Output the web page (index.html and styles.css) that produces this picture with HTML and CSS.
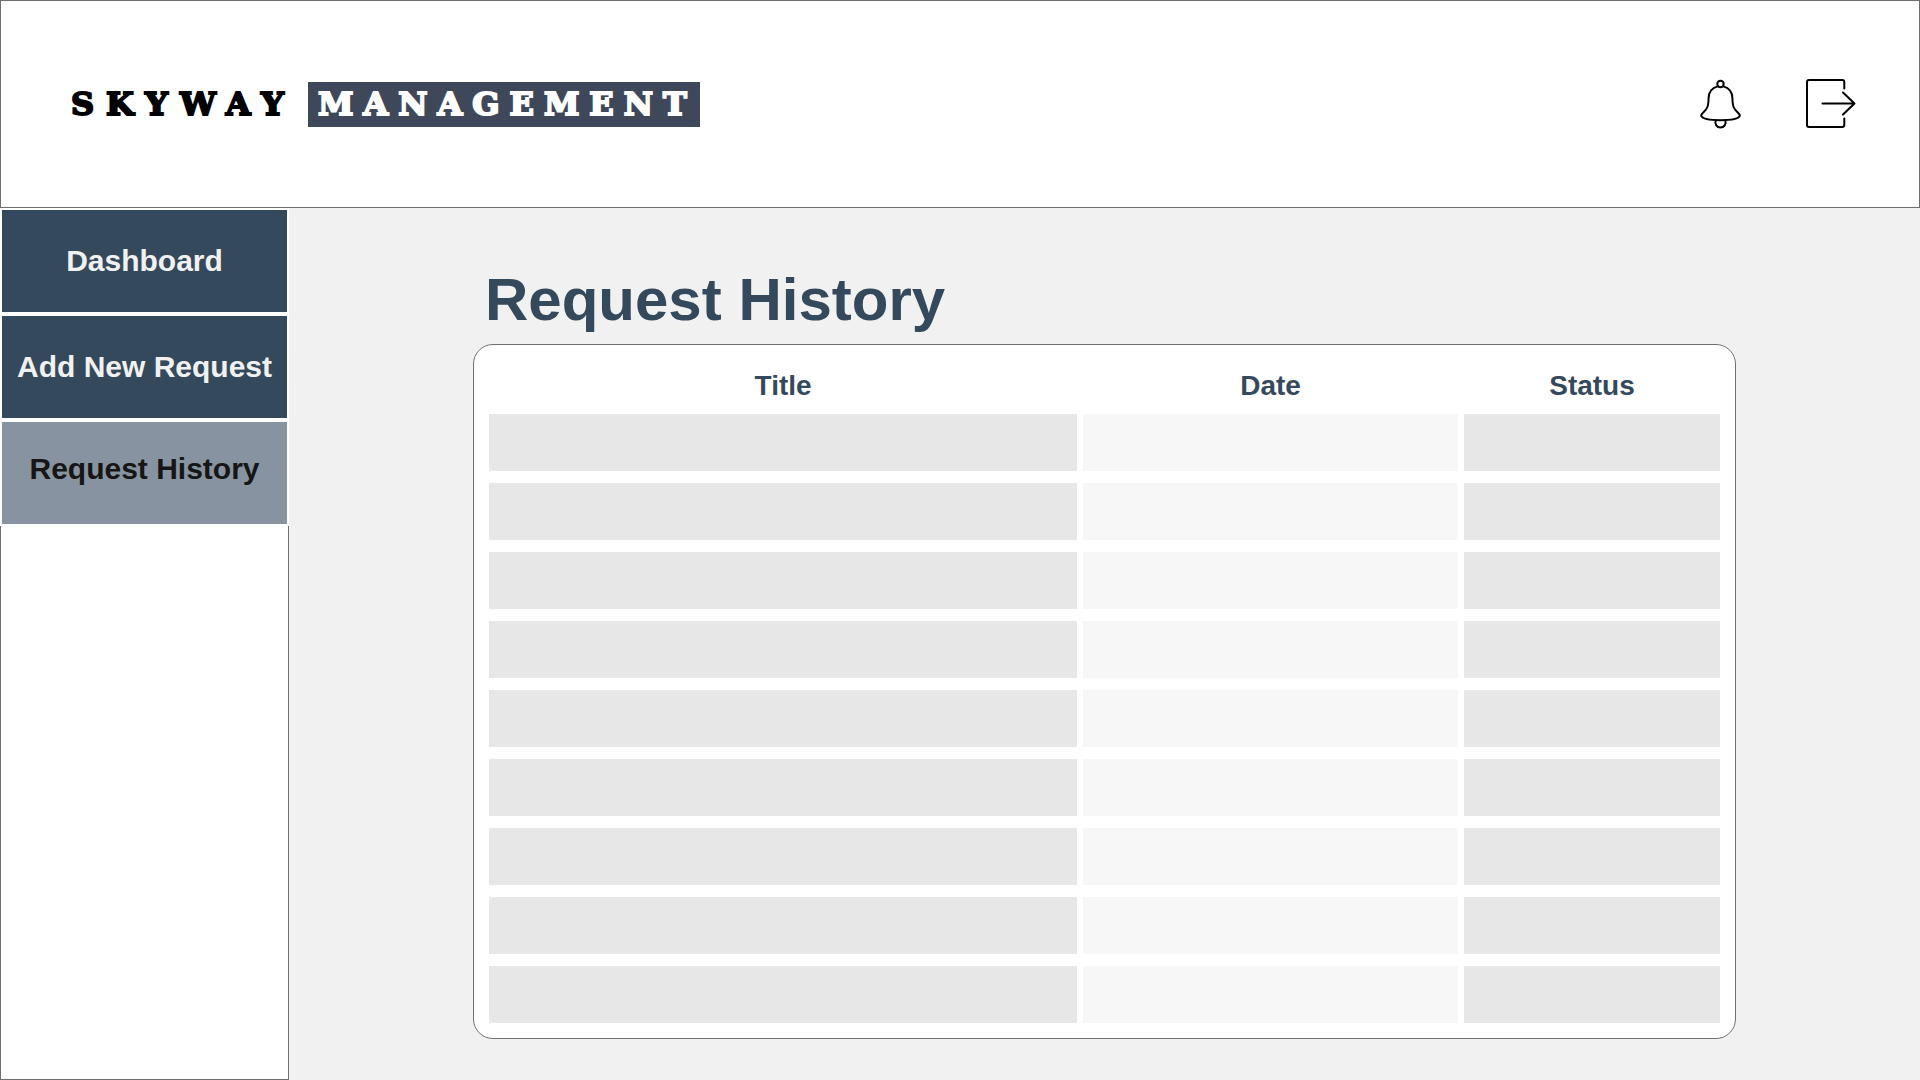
FILE: index.html
```html
<!DOCTYPE html>
<html lang="en">
<head>
  <meta charset="utf-8">
  <meta name="viewport" content="width=device-width, initial-scale=1">
  <title>Request History</title>
  <link rel="stylesheet" href="styles.css">
</head>
<body>
  <header class="topbar">
    <div class="logo"><span class="logo-name">SKYWAY</span><span class="logo-tag">MANAGEMENT</span></div>
    <div class="actions">
      <button class="icon-button" type="button" aria-label="Notifications">
        <svg width="42" height="50" viewBox="0 0 42 50">
          <circle cx="20.5" cy="5" r="3.2"/>
          <path d="M17.6 7.4C12 9 8.8 13 8.6 19C8.4 27 7.6 29.500 3.500 33.200C1.200 35.200.8 36 1.400 37.200C2.500 39.800 10 41.200 20.500 41.200S38.500 39.800 39.600 37.200C40.200 36 39.800 35.200 37.500 33.200C33.400 29.500 32.600 27 32.400 19C32.200 13 29 9 23.400 7.400"/>
          <path d="M15.700 41.500C14.500 45 16.800 48.600 20.500 48.600S26.500 45 25.300 41.500"/>
        </svg>
      </button>
      <button class="icon-button" type="button" aria-label="Log out">
        <svg width="50" height="50" viewBox="0 0 50 50">
          <path d="M38.300 9.500V3a2 2 0 0 0-2-2H3a2 2 0 0 0-2 2V46a2 2 0 0 0 2 2H36.300a2 2 0 0 0 2-2V39.500"/>
          <path d="M16.500 24.500H48.200M37 13.500L48.500 24.500L37 35.500"/>
        </svg>
      </button>
    </div>
  </header>
  <div class="layout">
    <aside class="sidebar">
      <nav class="menu">
        <a class="menu-item" href="#dashboard">Dashboard</a>
        <a class="menu-item" href="#new">Add New Request</a>
        <a class="menu-item menu-item-active" href="#history" aria-current="page">Request History</a>
      </nav>
      <div class="sidebar-rest"></div>
    </aside>
    <main class="content">
      <h1 class="heading">Request History</h1>
      <div class="card">
        <table class="history">
          <colgroup><col class="col-title"><col class="col-date"><col class="col-status"></colgroup>
          <thead>
            <tr><th scope="col">Title</th><th scope="col">Date</th><th scope="col">Status</th></tr>
          </thead>
          <tbody>
            <tr><td></td><td></td><td></td></tr>
            <tr><td></td><td></td><td></td></tr>
            <tr><td></td><td></td><td></td></tr>
            <tr><td></td><td></td><td></td></tr>
            <tr><td></td><td></td><td></td></tr>
            <tr><td></td><td></td><td></td></tr>
            <tr><td></td><td></td><td></td></tr>
            <tr><td></td><td></td><td></td></tr>
            <tr><td></td><td></td><td></td></tr>
          </tbody>
        </table>
      </div>
    </main>
  </div>
</body>
</html>
```
FILE: styles.css
```css
* {
  box-sizing: border-box;
}

body {
  margin: 0;
  min-height: 100vh;
  display: flex;
  flex-direction: column;
  background: #f1f1f1;
  color: #35495d;
  font-family: "Liberation Sans", Arial, Helvetica, sans-serif;
}

.topbar {
  display: flex;
  align-items: center;
  justify-content: space-between;
  padding: 78px 63px 78px 70px;
  border: 1px solid #707070;
  background: #fff;
}

.logo {
  display: flex;
  align-items: center;
  gap: 12px;
  font-family: "DejaVu Serif", "Liberation Serif", serif;
  font-size: 32px;
  font-weight: 700;
  line-height: 45px;
  -webkit-text-stroke: 2px currentColor;
}

.logo-name {
  color: #000;
  letter-spacing: 12px;
}

.logo-tag {
  padding: 0 3px 0 10px;
  background: #3f485b;
  color: #fff;
  letter-spacing: 10px;
}

.actions {
  display: flex;
  gap: 64px;
}

.icon-button {
  display: block;
  padding: 0;
  border: 0;
  background: none;
  cursor: pointer;
}

.icon-button svg {
  display: block;
  fill: none;
  stroke: #000;
  stroke-width: 2;
  stroke-linecap: round;
  stroke-linejoin: round;
}

.layout {
  flex: 1;
  display: flex;
}

.sidebar {
  flex: none;
  width: 289px;
  display: flex;
  flex-direction: column;
  background: #fff;
}

.menu-item {
  display: flex;
  align-items: center;
  justify-content: center;
  height: 106px;
  border: 2px solid #fff;
  background: #35495d;
  color: #f1f1f1;
  font-size: 30px;
  font-weight: 700;
  text-decoration: none;
  white-space: nowrap;
}

.menu-item-active {
  padding-bottom: 8px;
  background: #8793a0;
  color: #161616;
}

.sidebar-rest {
  flex: 1;
  border: solid #707070;
  border-width: 0 1px 1px;
}

.content {
  flex: 1;
  padding: 56px 184px 40px;
}

.heading {
  margin: 0 0 8px;
  padding-left: 12px;
  font-size: 60px;
  line-height: 72px;
}

.card {
  padding: 3px 9px;
  border: 1px solid #707070;
  border-radius: 20px;
  background: #fff;
}

.history {
  width: 100%;
  table-layout: fixed;
  border-collapse: separate;
  border-spacing: 6px 12px;
}

.col-title {
  width: 48.25%;
}

.col-date {
  width: 30.75%;
}

.col-status {
  width: 21%;
}

.history th {
  height: 42px;
  padding: 10px 0 0;
  font-size: 28px;
  line-height: 32px;
}

.history td {
  height: 57px;
  padding: 0;
  background: #e7e7e7;
}

.history td:nth-child(2) {
  background: #f7f7f7;
}
```
